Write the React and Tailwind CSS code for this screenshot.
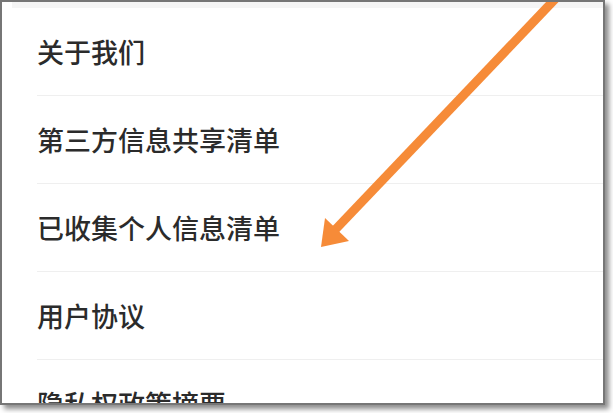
import React from 'react';

const ITEMS = ['关于我们', '第三方信息共享清单', '已收集个人信息清单', '用户协议', '隐私权政策摘要'];

const Fila = ({ texto }) => (
  <div className="h-[88px] ml-[35px] border-b border-[#efefef] flex items-center">
    <span className="text-[27px] leading-none text-[#2b2b2b] font-medium">{texto}</span>
  </div>
);

function App() {
  return (
    <div
      className="w-[613px] h-[413px] bg-white overflow-hidden"
      style={{ fontFamily: '"Noto Sans CJK SC", "Noto Sans", sans-serif' }}
    >
      <div className="relative w-[605px] h-[405px] border-2 border-[#767676] bg-white overflow-hidden shadow-[4px_4px_5px_rgba(0,0,0,0.45)]">
        <div className="h-[6px] bg-[#f5f5f5] ml-[10px]" />
        {ITEMS.map((t) => (
          <Fila key={t} texto={t} />
        ))}

        {/* flecha naranja */}
        <svg className="absolute left-[-2px] top-[-2px]" width="613" height="413" viewBox="0 0 613 413">
          <line x1="558" y1="-4" x2="334" y2="231" stroke="#f68b38" strokeWidth="9" />
          <polygon points="321,247 325,218 349,241" fill="#f68b38" />
        </svg>
      </div>
    </div>
  );
}

export default App;
